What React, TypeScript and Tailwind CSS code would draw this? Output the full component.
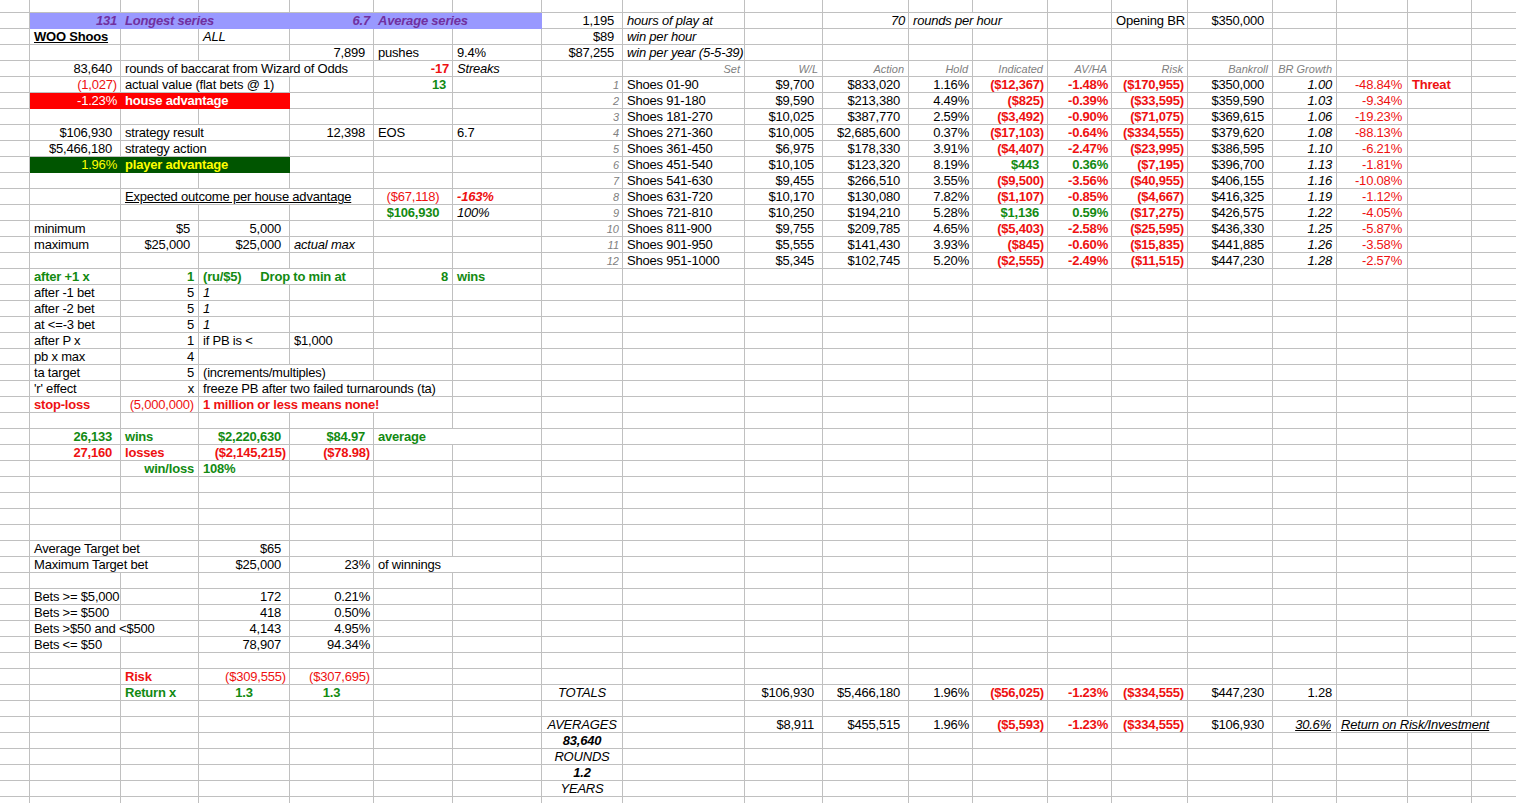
import React from "react";

type Cell = { c: number; t?: React.ReactNode; k?: string; s?: number; f?: string };

const r3 = "text-right pr-[3px]";
const r4 = "text-right pr-[4px]";
const r8 = "text-right pr-[8px]";
const l = "pl-[4px]";
const ctr = "text-center";
const RED = "text-[#ee1111]";
const GRN = "text-[#128a12]";
const PURT = "text-[#7030a0] font-bold italic";
const PURF = "bg-[#9999ff] border-[#9999ff]";
const REDF = "bg-[#ff0000] border-[#ff0000] text-white";
const GRNF = "bg-[#005500] border-[#005500] text-[#ffff00]";
const HDR = "text-right pr-[4px] text-[11px] tracking-[0px] italic text-[#808080]";
const IDX = "text-right pr-[3px] text-[11px] tracking-[0px] italic text-[#808080]";

const SPAN: Record<number, string> = { 1: "", 2: "col-span-2", 3: "col-span-3", 4: "col-span-4" };

const shoes: string[][] = [
  ["Shoes 01-90", "$9,700", "$833,020", "1.16%", "($12,367)", "-1.48%", "($170,955)", "$350,000", "1.00", "-48.84%"],
  ["Shoes 91-180", "$9,590", "$213,380", "4.49%", "($825)", "-0.39%", "($33,595)", "$359,590", "1.03", "-9.34%"],
  ["Shoes 181-270", "$10,025", "$387,770", "2.59%", "($3,492)", "-0.90%", "($71,075)", "$369,615", "1.06", "-19.23%"],
  ["Shoes 271-360", "$10,005", "$2,685,600", "0.37%", "($17,103)", "-0.64%", "($334,555)", "$379,620", "1.08", "-88.13%"],
  ["Shoes 361-450", "$6,975", "$178,330", "3.91%", "($4,407)", "-2.47%", "($23,995)", "$386,595", "1.10", "-6.21%"],
  ["Shoes 451-540", "$10,105", "$123,320", "8.19%", "$443", "0.36%", "($7,195)", "$396,700", "1.13", "-1.81%"],
  ["Shoes 541-630", "$9,455", "$266,510", "3.55%", "($9,500)", "-3.56%", "($40,955)", "$406,155", "1.16", "-10.08%"],
  ["Shoes 631-720", "$10,170", "$130,080", "7.82%", "($1,107)", "-0.85%", "($4,667)", "$416,325", "1.19", "-1.12%"],
  ["Shoes 721-810", "$10,250", "$194,210", "5.28%", "$1,136", "0.59%", "($17,275)", "$426,575", "1.22", "-4.05%"],
  ["Shoes 811-900", "$9,755", "$209,785", "4.65%", "($5,403)", "-2.58%", "($25,595)", "$436,330", "1.25", "-5.87%"],
  ["Shoes 901-950", "$5,555", "$141,430", "3.93%", "($845)", "-0.60%", "($15,835)", "$441,885", "1.26", "-3.58%"],
  ["Shoes 951-1000", "$5,345", "$102,745", "5.20%", "($2,555)", "-2.49%", "($11,515)", "$447,230", "1.28", "-2.57%"],
];

function shoeCells(i: number): Cell[] {
  const d = shoes[i];
  const pos = !d[4].startsWith("(");
  return [
    { c: 7, t: String(i + 1), k: IDX },
    { c: 8, t: d[0], k: l },
    { c: 9, t: d[1], k: r8 },
    { c: 10, t: d[2], k: r8 },
    { c: 11, t: d[3], k: r3 },
    { c: 12, t: d[4], k: pos ? `${r8} ${GRN} font-bold` : `${r3} ${RED} font-bold` },
    { c: 13, t: d[5], k: `${r3} font-bold ${pos ? GRN : RED}` },
    { c: 14, t: d[6], k: `${r3} ${RED} font-bold` },
    { c: 15, t: d[7], k: r8 },
    { c: 16, t: d[8], k: `${r4} italic` },
    { c: 17, t: d[9], k: `text-right pr-[5px] ${RED}` },
  ];
}

const rows: Record<number, Cell[]> = {
  0: [
    { c: 1, t: "131", k: `${r3} ${PURT}`, f: PURF },
    { c: 2, s: 2, t: "Longest series", k: `${l} ${PURT}`, f: PURF },
    { c: 4, t: "6.7", k: `${r3} ${PURT}`, f: PURF },
    { c: 5, s: 2, t: "Average series", k: `${l} ${PURT}`, f: PURF },
    { c: 7, t: "1,195", k: r8 },
    { c: 8, t: "hours of play at", k: `${l} italic` },
    { c: 10, t: "70", k: `${r3} italic` },
    { c: 11, s: 2, t: "rounds per hour", k: `${l} italic` },
    { c: 14, t: "Opening BR", k: l },
    { c: 15, t: "$350,000", k: r8 },
  ],
  1: [
    { c: 1, t: "WOO Shoos", k: `${l} font-bold underline` },
    { c: 3, t: "ALL", k: `${l} italic` },
    { c: 7, t: "$89", k: r8 },
    { c: 8, t: "win per hour", k: `${l} italic` },
  ],
  2: [
    { c: 4, t: "7,899", k: r8 },
    { c: 5, t: "pushes", k: l },
    { c: 6, t: "9.4%", k: l },
    { c: 7, t: "$87,255", k: r8 },
    { c: 8, t: "win per year (5-5-39)", k: `${l} italic` },
  ],
  3: [
    { c: 1, t: "83,640", k: r8 },
    { c: 2, s: 3, t: "rounds of baccarat from Wizard of Odds", k: l },
    { c: 5, t: "-17", k: `${r3} ${RED} font-bold` },
    { c: 6, t: "Streaks", k: `${l} italic` },
    { c: 8, t: "Set", k: HDR },
    { c: 9, t: "W/L", k: HDR },
    { c: 10, t: "Action", k: HDR },
    { c: 11, t: "Hold", k: HDR },
    { c: 12, t: "Indicated", k: HDR },
    { c: 13, t: "AV/HA", k: HDR },
    { c: 14, t: "Risk", k: HDR },
    { c: 15, t: "Bankroll", k: HDR },
    { c: 16, t: "BR Growth", k: HDR },
  ],
  4: [
    { c: 1, t: "(1,027)", k: `${r3} ${RED}` },
    { c: 2, s: 2, t: "actual value (flat bets @ 1)", k: l },
    { c: 5, t: "13", k: `text-right pr-[6px] ${GRN} font-bold` },
    ...shoeCells(0),
    { c: 18, t: "Threat", k: `${l} ${RED} font-bold` },
  ],
  5: [
    { c: 1, t: "-1.23%", k: r3, f: REDF },
    { c: 2, s: 2, t: "house advantage", k: `${l} font-bold`, f: REDF },
    ...shoeCells(1),
  ],
  6: [...shoeCells(2)],
  7: [
    { c: 1, t: "$106,930", k: r8 },
    { c: 2, s: 2, t: "strategy result", k: l },
    { c: 4, t: "12,398", k: r8 },
    { c: 5, t: "EOS", k: l },
    { c: 6, t: "6.7", k: l },
    ...shoeCells(3),
  ],
  8: [
    { c: 1, t: "$5,466,180", k: r8 },
    { c: 2, s: 2, t: "strategy action", k: l },
    ...shoeCells(4),
  ],
  9: [
    { c: 1, t: "1.96%", k: r3, f: GRNF },
    { c: 2, s: 2, t: "player advantage", k: `${l} font-bold`, f: GRNF },
    ...shoeCells(5),
  ],
  10: [...shoeCells(6)],
  11: [
    { c: 2, s: 3, t: "Expected outcome per house advantage", k: `${l} underline` },
    { c: 5, t: "($67,118)", k: `${ctr} ${RED}` },
    { c: 6, t: "-163%", k: `${l} ${RED} font-bold italic` },
    ...shoeCells(7),
  ],
  12: [
    { c: 5, t: "$106,930", k: `${ctr} ${GRN} font-bold` },
    { c: 6, t: "100%", k: `${l} italic` },
    ...shoeCells(8),
  ],
  13: [
    { c: 1, t: "minimum", k: l },
    { c: 2, t: "$5", k: r8 },
    { c: 3, t: "5,000", k: r8 },
    ...shoeCells(9),
  ],
  14: [
    { c: 1, t: "maximum", k: l },
    { c: 2, t: "$25,000", k: r8 },
    { c: 3, t: "$25,000", k: r8 },
    { c: 4, t: "actual max", k: `${l} italic` },
    ...shoeCells(10),
  ],
  15: [...shoeCells(11)],
  16: [
    { c: 1, t: "after +1 x", k: `${l} ${GRN} font-bold` },
    { c: 2, t: "1", k: `${r4} ${GRN} font-bold` },
    {
      c: 3,
      s: 2,
      t: (
        <>
          <span>(ru/$5)</span>
          <span className="ml-[19px]">Drop to min at</span>
        </>
      ),
      k: `${l} ${GRN} font-bold`,
    },
    { c: 5, t: "8", k: `${r4} ${GRN} font-bold` },
    { c: 6, t: "wins", k: `${l} ${GRN} font-bold` },
  ],
  17: [
    { c: 1, t: "after -1 bet", k: l },
    { c: 2, t: "5", k: r4 },
    { c: 3, t: "1", k: `${l} italic` },
  ],
  18: [
    { c: 1, t: "after -2 bet", k: l },
    { c: 2, t: "5", k: r4 },
    { c: 3, t: "1", k: `${l} italic` },
  ],
  19: [
    { c: 1, t: "at <=-3 bet", k: l },
    { c: 2, t: "5", k: r4 },
    { c: 3, t: "1", k: `${l} italic` },
  ],
  20: [
    { c: 1, t: "after P x", k: l },
    { c: 2, t: "1", k: r4 },
    { c: 3, t: "if PB is <", k: l },
    { c: 4, t: "$1,000", k: l },
  ],
  21: [
    { c: 1, t: "pb x max", k: l },
    { c: 2, t: "4", k: r4 },
  ],
  22: [
    { c: 1, t: "ta target", k: l },
    { c: 2, t: "5", k: r4 },
    { c: 3, s: 2, t: "(increments/multiples)", k: l },
  ],
  23: [
    { c: 1, t: "'r' effect", k: l },
    { c: 2, t: "x", k: r4 },
    { c: 3, s: 3, t: "freeze PB after two failed turnarounds (ta)", k: l },
  ],
  24: [
    { c: 1, t: "stop-loss", k: `${l} ${RED} font-bold` },
    { c: 2, t: "(5,000,000)", k: `${r4} ${RED}` },
    { c: 3, s: 3, t: "1 million or less means none!", k: `${l} ${RED} font-bold` },
  ],
  26: [
    { c: 1, t: "26,133", k: `${r8} ${GRN} font-bold` },
    { c: 2, t: "wins", k: `${l} ${GRN} font-bold` },
    { c: 3, t: "$2,220,630", k: `${r8} ${GRN} font-bold` },
    { c: 4, t: "$84.97", k: `${r8} ${GRN} font-bold` },
    { c: 5, s: 2, t: "average", k: `${l} ${GRN} font-bold` },
  ],
  27: [
    { c: 1, t: "27,160", k: `${r8} ${RED} font-bold` },
    { c: 2, t: "losses", k: `${l} ${RED} font-bold` },
    { c: 3, t: "($2,145,215)", k: `${r3} ${RED} font-bold` },
    { c: 4, t: "($78.98)", k: `${r3} ${RED} font-bold` },
  ],
  28: [
    { c: 2, t: "win/loss", k: `${r4} ${GRN} font-bold` },
    { c: 3, t: "108%", k: `${l} ${GRN} font-bold` },
  ],
  33: [
    { c: 1, s: 2, t: "Average Target bet", k: l },
    { c: 3, t: "$65", k: r8 },
  ],
  34: [
    { c: 1, s: 2, t: "Maximum Target bet", k: l },
    { c: 3, t: "$25,000", k: r8 },
    { c: 4, t: "23%", k: r3 },
    { c: 5, s: 2, t: "of winnings", k: l },
  ],
  36: [
    { c: 1, t: "Bets >= $5,000", k: l },
    { c: 3, t: "172", k: r8 },
    { c: 4, t: "0.21%", k: r3 },
  ],
  37: [
    { c: 1, t: "Bets >= $500", k: l },
    { c: 3, t: "418", k: r8 },
    { c: 4, t: "0.50%", k: r3 },
  ],
  38: [
    { c: 1, s: 2, t: "Bets >$50 and <$500", k: l },
    { c: 3, t: "4,143", k: r8 },
    { c: 4, t: "4.95%", k: r3 },
  ],
  39: [
    { c: 1, t: "Bets <= $50", k: l },
    { c: 3, t: "78,907", k: r8 },
    { c: 4, t: "94.34%", k: r3 },
  ],
  41: [
    { c: 2, t: "Risk", k: `${l} ${RED} font-bold` },
    { c: 3, t: "($309,555)", k: `${r3} ${RED}` },
    { c: 4, t: "($307,695)", k: `${r3} ${RED}` },
  ],
  42: [
    { c: 2, t: "Return x", k: `${l} ${GRN} font-bold` },
    { c: 3, t: "1.3", k: `${ctr} ${GRN} font-bold` },
    { c: 4, t: "1.3", k: `${ctr} ${GRN} font-bold` },
    { c: 7, t: "TOTALS", k: `${ctr} italic` },
    { c: 9, t: "$106,930", k: r8 },
    { c: 10, t: "$5,466,180", k: r8 },
    { c: 11, t: "1.96%", k: r3 },
    { c: 12, t: "($56,025)", k: `${r3} ${RED} font-bold` },
    { c: 13, t: "-1.23%", k: `${r3} ${RED} font-bold` },
    { c: 14, t: "($334,555)", k: `${r3} ${RED} font-bold` },
    { c: 15, t: "$447,230", k: r8 },
    { c: 16, t: "1.28", k: r4 },
  ],
  44: [
    { c: 7, t: "AVERAGES", k: `${ctr} italic` },
    { c: 9, t: "$8,911", k: r8 },
    { c: 10, t: "$455,515", k: r8 },
    { c: 11, t: "1.96%", k: r3 },
    { c: 12, t: "($5,593)", k: `${r3} ${RED} font-bold` },
    { c: 13, t: "-1.23%", k: `${r3} ${RED} font-bold` },
    { c: 14, t: "($334,555)", k: `${r3} ${RED} font-bold` },
    { c: 15, t: "$106,930", k: r8 },
    { c: 16, t: "30.6%", k: "text-right pr-[5px] italic underline" },
    { c: 17, s: 3, t: "Return on Risk/Investment", k: `${l} italic underline` },
  ],
  45: [{ c: 7, t: "83,640", k: `${ctr} font-bold italic` }],
  46: [{ c: 7, t: "ROUNDS", k: `${ctr} italic` }],
  47: [{ c: 7, t: "1.2", k: `${ctr} font-bold italic` }],
  48: [{ c: 7, t: "YEARS", k: `${ctr} italic` }],
};

const NCOLS = 20;
const NROWS = 50;
const base = "border-r border-b whitespace-nowrap leading-[16px] overflow-visible";

function renderRow(r: number) {
  const cells = rows[r] ?? [];
  const out: React.ReactNode[] = [];
  let col = 0;
  while (col < NCOLS) {
    const cell = cells.find((x) => x.c === col);
    if (cell) {
      const s = cell.s ?? 1;
      out.push(
        <div
          key={`${r}-${col}`}
          className={`${base} ${SPAN[s]} ${cell.f ?? "border-[#c0c0c0]"} ${cell.k ?? ""}`}
        >
          {cell.t}
        </div>
      );
      col += s;
    } else {
      out.push(<div key={`${r}-${col}`} className={`${base} border-[#c0c0c0]`} />);
      col += 1;
    }
  }
  return out;
}

export default function App() {
  return (
    <div className="w-[1516px] h-[803px] overflow-hidden bg-white text-black font-['Liberation_Sans',Arial,sans-serif] text-[13px] tracking-[-0.2px]">
      <div className="grid grid-cols-[30px_91px_78px_91px_84px_79px_89px_81px_122px_78px_86px_64px_75px_64px_76px_85px_64px_71px_64px_64px] grid-rows-[13px] auto-rows-[16px] w-[1536px]">
        {Array.from({ length: NCOLS }, (_, i) => (
          <div key={`top-${i}`} className="border-r border-b border-[#c0c0c0]" />
        ))}
        {Array.from({ length: NROWS }, (_, r) => renderRow(r))}
      </div>
    </div>
  );
}
